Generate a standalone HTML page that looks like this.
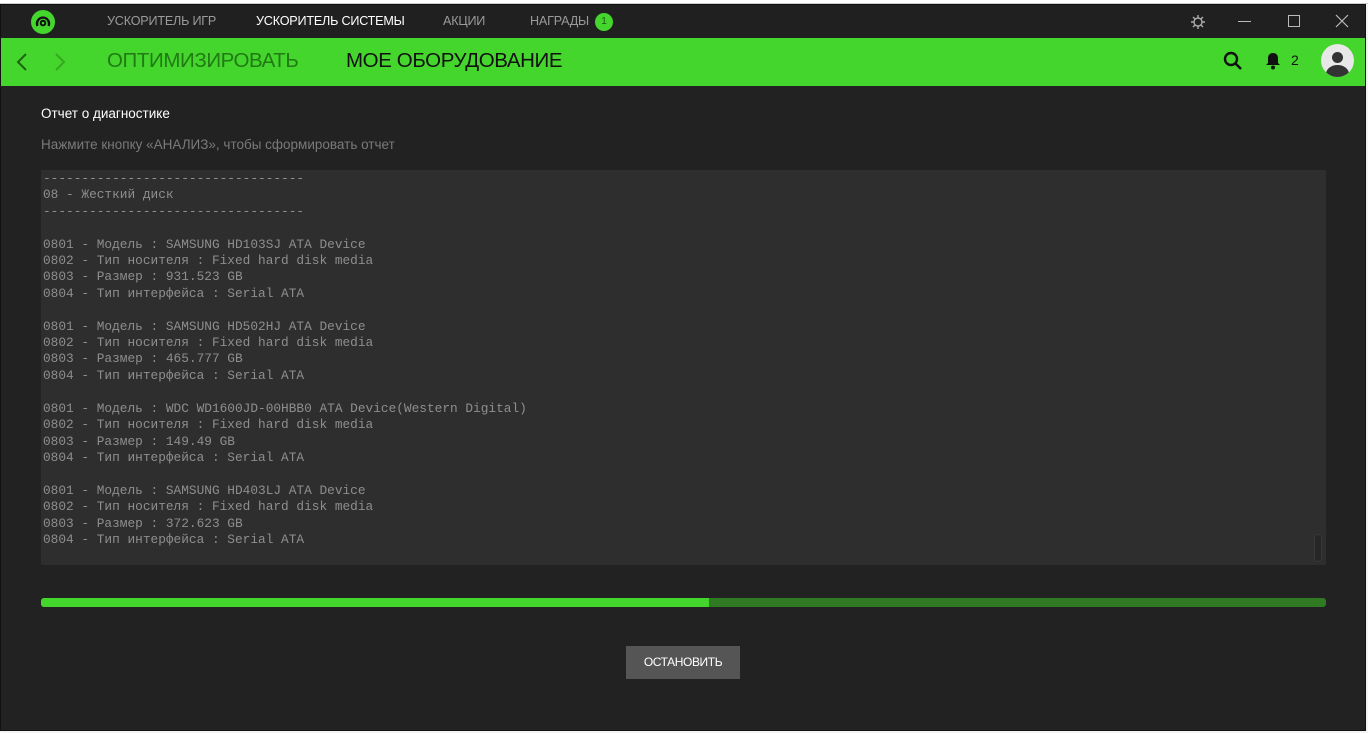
<!DOCTYPE html>
<html><head><meta charset="utf-8"><style>
*{margin:0;padding:0;box-sizing:border-box}
body{width:1368px;height:733px;background:#f4f4f4;position:relative;overflow:hidden;font-family:"Liberation Sans",sans-serif}
.top{position:absolute;left:0;top:0;width:1368px;height:4px;background:#fff;border-bottom:1px solid #ccc}
.win{position:absolute;left:0;top:4px;width:1366px;height:727px;background:#222;border:1px solid #111}
.bar{position:absolute;left:0;top:0;width:1364px;height:33px;background:#202020}
.nav{position:absolute;top:9px;font-size:12.6px;color:#9a9a9a;letter-spacing:-0.2px}
.g{position:absolute;left:0;top:33px;width:1364px;height:48px;background:#44d62c}
.gt{position:absolute;top:11px;font-size:20.5px;letter-spacing:-0.4px}
pre{font-family:"Liberation Mono",monospace;font-size:12.8px;line-height:16.4px;color:#8e8e8e}
</style></head><body>
<div class="top"></div>
<div class="win">
 <div class="bar">
  <div style="position:absolute;left:30px;top:5px;width:24px;height:24px;border-radius:50%;background:#44d62c"></div>
  <svg style="position:absolute;left:30px;top:5px" width="24" height="24" viewBox="0 0 24 24"><path d="M6.5 16 A6 6 0 1 1 17.5 16" fill="none" stroke="#111" stroke-width="2.4"/><circle cx="12" cy="13" r="2.3" fill="none" stroke="#111" stroke-width="2"/></svg>
  <div class="nav" style="left:106px">УСКОРИТЕЛЬ ИГР</div>
  <div class="nav" style="left:255px;color:#fff">УСКОРИТЕЛЬ СИСТЕМЫ</div>
  <div class="nav" style="left:442px">АКЦИИ</div>
  <div class="nav" style="left:529px">НАГРАДЫ</div>
  <div style="position:absolute;left:594px;top:8px;width:18px;height:18px;border-radius:50%;background:#44d62c;color:#1a5a10;font-size:10px;text-align:center;line-height:18px">1</div>
  <svg style="position:absolute;left:1189px;top:9px" width="16" height="16" viewBox="0 0 16 16"><circle cx="8" cy="8" r="4" fill="none" stroke="#aaa" stroke-width="1.4"/><path d="M8 1v3M8 12v3M1 8h3M12 8h3M3 3l2 2M11 11l2 2M13 3l-2 2M5 11l-2 2" stroke="#aaa" stroke-width="1.4"/></svg>
  <div style="position:absolute;left:1237px;top:16px;width:13px;height:1px;background:#bbb"></div>
  <div style="position:absolute;left:1287px;top:10px;width:12px;height:12px;border:1px solid #bbb"></div>
  <svg style="position:absolute;left:1334px;top:9px" width="14" height="14" viewBox="0 0 14 14"><path d="M1 1L13 13M13 1L1 13" stroke="#bbb" stroke-width="1.2"/></svg>
 </div>
 <div class="g">
  <svg style="position:absolute;left:14px;top:14px" width="14" height="20" viewBox="0 0 14 20"><path d="M11 2L3 10l8 8" fill="none" stroke="#1f6312" stroke-width="2"/></svg>
  <svg style="position:absolute;left:52px;top:14px" width="14" height="20" viewBox="0 0 14 20"><path d="M3 2l8 8-8 8" fill="none" stroke="#36a822" stroke-width="2"/></svg>
  <div class="gt" style="left:106px;color:#217a14">ОПТИМИЗИРОВАТЬ</div>
  <div class="gt" style="left:345px;color:#111">МОЕ ОБОРУДОВАНИЕ</div>
  <svg style="position:absolute;left:1222px;top:13px" width="20" height="20" viewBox="0 0 20 20"><circle cx="8" cy="8" r="6" fill="none" stroke="#111" stroke-width="2.4"/><path d="M12.5 12.5L18 18" stroke="#111" stroke-width="2.6"/></svg>
  <svg style="position:absolute;left:1264px;top:14px" width="16" height="18" viewBox="0 0 16 18"><path d="M8 1c-3 0-5 2-5 5v5l-2 2h14l-2-2V6c0-3-2-5-5-5z" fill="#111"/><circle cx="8" cy="15.5" r="2" fill="#111"/></svg>
  <div style="position:absolute;left:1290px;top:14px;font-size:14px;color:#111">2</div>
  <div style="position:absolute;left:1320px;top:6px;width:33px;height:33px;border-radius:50%;background:#e8e8e8;overflow:hidden">
   <div style="position:absolute;left:11px;top:8px;width:11px;height:11px;border-radius:50%;background:#333"></div>
   <div style="position:absolute;left:5px;top:21px;width:23px;height:18px;border-radius:50%;background:#333"></div>
  </div>
 </div>
 <div style="position:absolute;left:40px;top:101px;font-size:13.5px;color:#fff">Отчет о диагностике</div>
 <div style="position:absolute;left:40px;top:132px;font-size:13.5px;color:#7a7a7a">Нажмите кнопку «АНАЛИЗ», чтобы сформировать отчет</div>
 <div style="position:absolute;left:40px;top:165px;width:1285px;height:395px;background:#2e2e2e;overflow:hidden;padding:1px 0 0 2px">
<pre>----------------------------------
08 - Жесткий диск
----------------------------------

0801 - Модель : SAMSUNG HD103SJ ATA Device
0802 - Тип носителя : Fixed hard disk media
0803 - Размер : 931.523 GB
0804 - Тип интерфейса : Serial ATA

0801 - Модель : SAMSUNG HD502HJ ATA Device
0802 - Тип носителя : Fixed hard disk media
0803 - Размер : 465.777 GB
0804 - Тип интерфейса : Serial ATA

0801 - Модель : WDC WD1600JD-00HBB0 ATA Device(Western Digital)
0802 - Тип носителя : Fixed hard disk media
0803 - Размер : 149.49 GB
0804 - Тип интерфейса : Serial ATA

0801 - Модель : SAMSUNG HD403LJ ATA Device
0802 - Тип носителя : Fixed hard disk media
0803 - Размер : 372.623 GB
0804 - Тип интерфейса : Serial ATA</pre>
  <div style="position:absolute;left:1273px;top:364px;width:8px;height:28px;border-radius:4px;background:#262626;border:1px solid #383838"></div>
 </div>
 <div style="position:absolute;left:40px;top:593px;width:1285px;height:9px;border-radius:3px;background:#2f7a22;overflow:hidden"><div style="width:668px;height:9px;background:#44d62c"></div></div>
 <div style="position:absolute;left:625px;top:641px;width:114px;height:33px;background:#555;color:#fff;font-size:12px;text-align:center;line-height:33px;letter-spacing:-0.4px">ОСТАНОВИТЬ</div>
</div>
</body></html>
